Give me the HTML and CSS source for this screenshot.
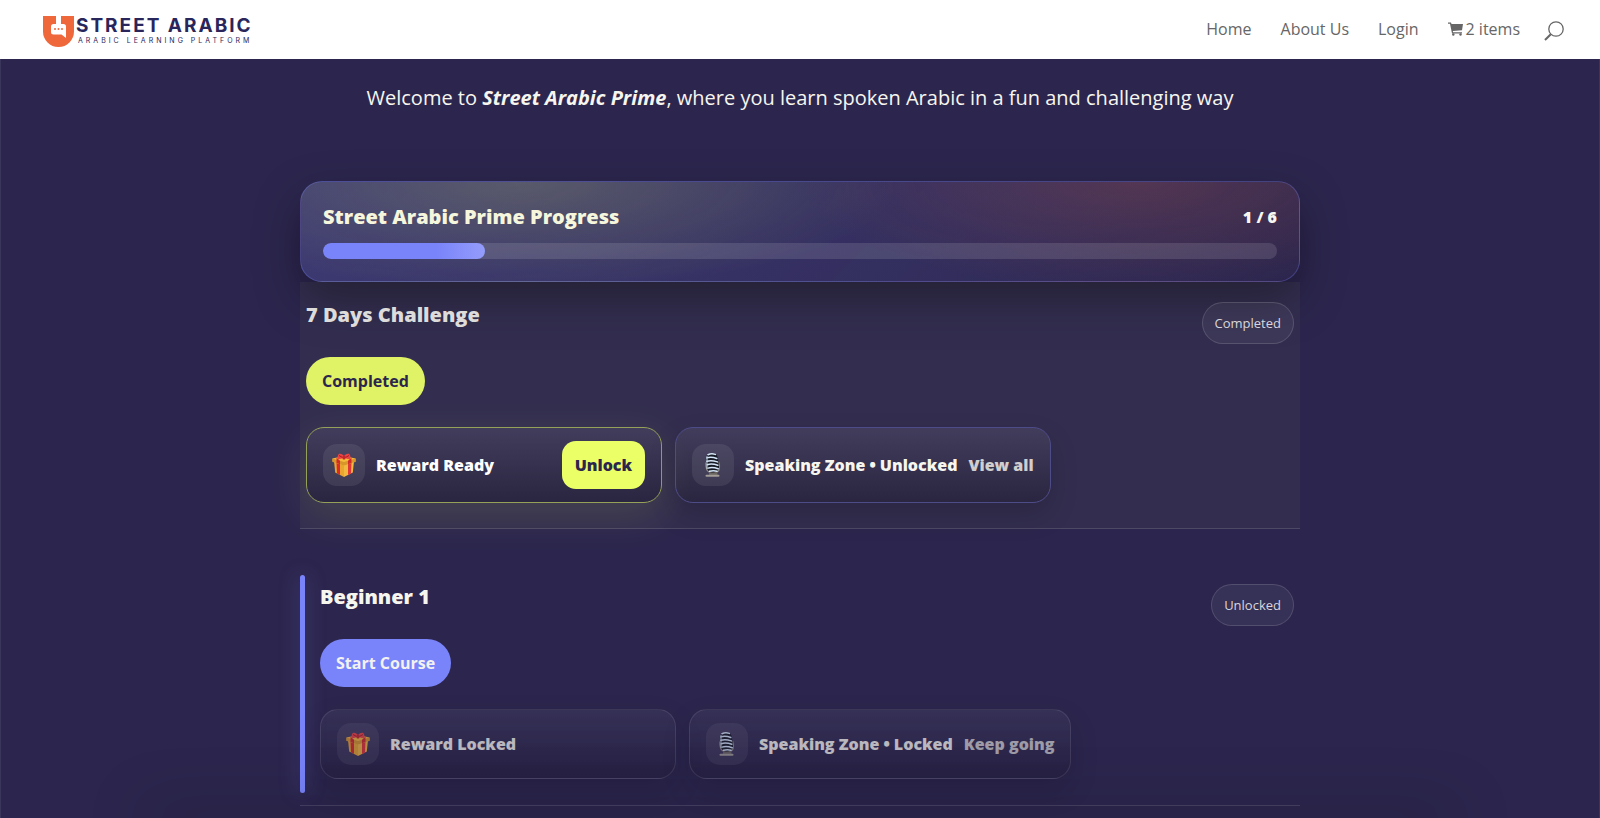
FILE: index.html
```html
<!DOCTYPE html>
<html lang="en">
<head>
    <meta charset="UTF-8">
    <meta name="viewport" content="width=device-width, initial-scale=1.0">
    <title>Street Arabic Prime</title>
    <link rel="stylesheet" href="styles.css">
</head>
<body>
    <!-- shared icons -->
    <svg class="sprite" aria-hidden="true">
        <symbol id="gift" viewBox="0 0 24 24">
            <path d="M2 8l10 4v12L3.200 19.500z" fill="#e9a52f"/>
            <path d="M22 8l-10 4v12l8.800-4.500z" fill="#f2b941"/>
            <path d="M4.500 9l3.500 1.400v11.500l-3-1.500z" fill="#d92b2b"/>
            <path d="M19.500 9L16 10.400v11.500l3-1.500z" fill="#e23535"/>
            <path d="M.5 5.500L12 3l11.500 2.500v3.200L12 12.500.5 8.700z" fill="#f5b93c"/>
            <path d="M.5 5.500L12 9l11.500-3.500v3.200L12 12.500.5 8.700z" fill="#d8952a"/>
            <path d="M4.500 4.700L8 7.800v3.400l-3.500-1.200zM19.500 4.700L16 7.800v3.400l3.500-1.200z" fill="#d22a2a"/>
            <path d="M12 4.800C9 5.800 6.500 6.800 5.300 5.800 5.500 4 5.700 2 7 .8 9 .2 11 1.500 12 3c1-1.500 3-2.800 5-2.200 1.300 1.200 1.500 3.200 1.700 5-1.200 1-3.700 0-6.700-1z" fill="#ee4343"/>
            <path d="M7 2.500l3.500 2M17 2.500l-3.500 2" stroke="#a71d24" stroke-width="1"/>
            <rect x="10.500" y="2.800" width="3" height="3.600" rx="1" fill="#c4262c"/>
        </symbol>
        <symbol id="mic" viewBox="0 0 24 24">
            <path d="M5 9.500c-.5 6 1.500 9 4.500 10M17.500 9c2 6 .5 10-3 10.500" fill="none" stroke="#8b8680" stroke-width="1.500"/>
            <path d="M8 17h8l.5 5H8z" fill="#6b6660"/>
            <rect x="4.500" y="21.800" width="14" height="2" rx="1" fill="#a39e98"/>
            <rect x="5.500" y=".3" width="12" height="19" rx="5" fill="#161a24" transform="rotate(-8 12 10)"/>
            <g fill="none" stroke="#d5e6f8" stroke-width="1.500" stroke-linecap="round">
                <path d="M7 1.700q3.500-1.500 7.300-.3"/>
                <path d="M5.800 4.900q4.500-1.400 10 .6"/>
                <path d="M5.900 8.300q4.500-1.400 10.500.6"/>
                <path d="M6.300 11.700q4.500-1.400 10.500.6"/>
                <path d="M7 15.100q4.500-1.400 10.200.6"/>
                <path d="M8.500 18.200q4-1 7.500 0"/>
            </g>
            <path d="M6 3v13" stroke="#c2d3e6" stroke-width="1"/>
        </symbol>
    </svg>

    <header class="site-header">
        <a class="logo" href="#">
            <svg class="logo-mark" viewBox="0 0 31 31" aria-hidden="true">
                <path d="M0 0h13v8h5V0h13v15.500a15.500 15.500 0 0 1-31 0z" fill="#ee683c"/>
                <path d="M10.500 8h10a2.500 2.500 0 0 1 2.500 2.500V22l-4.500-3.500h-8A2.500 2.500 0 0 1 8 16v-5.500A2.500 2.500 0 0 1 10.500 8z" fill="#fff"/>
                <g fill="#ee683c"><circle cx="12" cy="13" r="1"/><circle cx="15.500" cy="13" r="1"/><circle cx="19" cy="13" r="1"/></g>
            </svg>
            <span class="logo-text">
                <span class="logo-name">STREET ARABIC</span>
                <span class="logo-tagline">ARABIC LEARNING PLATFORM</span>
            </span>
        </a>
        <nav class="main-nav">
            <a href="#">Home</a>
            <a href="#">About Us</a>
            <a href="#">Login</a>
            <a class="cart" href="#">
                <svg viewBox="0 0 15 14" aria-hidden="true">
                    <path d="M0 .5h3l.5 1.500H15l-1 6.300-9.200.7.300 1.300H14v1.200H4L2 1.700H0z" fill="#666"/>
                    <circle cx="5.300" cy="12.500" r="1.200" fill="#666"/>
                    <circle cx="12.500" cy="12.500" r="1.200" fill="#666"/>
                </svg>2 items</a>
            <button class="search" type="button" aria-label="Search">
                <svg viewBox="0 0 20 20" aria-hidden="true">
                    <circle cx="12" cy="8" r="7.200" fill="none" stroke="#666" stroke-width="1.300"/>
                    <path d="M6.800 13.200L1 19" stroke="#666" stroke-width="2"/>
                </svg>
            </button>
        </nav>
    </header>

    <main>
        <p class="welcome">Welcome to <strong><em>Street Arabic Prime</em></strong>, where you learn spoken Arabic in a fun and challenging way</p>

        <div class="courses">
            <section class="progress-card">
                <div class="progress-head">
                    <h2>Street Arabic Prime Progress</h2>
                    <span class="progress-count">1 / 6</span>
                </div>
                <div class="progress-track">
                    <div class="progress-fill" style="width: 17%"></div>
                </div>
            </section>

            <section class="course completed">
                <div class="course-head">
                    <h2>7 Days Challenge</h2>
                    <span class="status">Completed</span>
                </div>
                <a class="course-btn" href="#">Completed</a>
                <div class="extras">
                    <div class="extra reward ready">
                        <span class="extra-icon"><svg><use href="#gift"/></svg></span>
                        <span class="extra-title">Reward Ready</span>
                        <button class="unlock" type="button">Unlock</button>
                    </div>
                    <div class="extra speaking">
                        <span class="extra-icon"><svg><use href="#mic"/></svg></span>
                        <span class="extra-title">Speaking Zone • Unlocked</span>
                        <a class="extra-note" href="#">View all</a>
                    </div>
                </div>
            </section>

            <section class="course current">
                <div class="marker"></div>
                <div class="course-body">
                    <div class="course-head">
                        <h2>Beginner 1</h2>
                        <span class="status">Unlocked</span>
                    </div>
                    <a class="course-btn start" href="#">Start Course</a>
                    <div class="extras">
                        <div class="extra reward locked">
                            <span class="extra-icon"><svg><use href="#gift"/></svg></span>
                            <span class="extra-title">Reward Locked</span>
                        </div>
                        <div class="extra locked">
                            <span class="extra-icon"><svg><use href="#mic"/></svg></span>
                            <span class="extra-title">Speaking Zone • Locked</span>
                            <span class="extra-note">Keep going</span>
                        </div>
                    </div>
                </div>
            </section>
        </div>
    </main>
</body>
</html>
```

FILE: styles.css
```css
* {
    box-sizing: border-box;
}

body {
    margin: 0;
    background: #2c264e;
    color: #f7f6ee;
    font-family: "Open Sans", Arial, sans-serif;
    font-size: 16px;
    line-height: 24px;
    overflow: hidden;
}

/* soft shade along the bottom edge */
body::after {
    content: "";
    position: fixed;
    right: 150px;
    bottom: -2px;
    left: 150px;
    height: 2px;
    box-shadow: 0 0 60px 8px rgba(0, 0, 0, 0.3);
}

h2, p {
    margin: 0;
}

a {
    color: inherit;
    text-decoration: none;
}

button {
    border: none;
    font-family: inherit;
    cursor: pointer;
}

.sprite {
    position: absolute;
    width: 0;
    height: 0;
}

/* header */
.site-header {
    display: flex;
    justify-content: space-between;
    align-items: center;
    height: 59px;
    padding: 0 36px 0 43px;
    background: #fff;
}

.logo {
    display: flex;
    gap: 2px;
    padding-top: 3px;
}

.logo-mark {
    width: 31px;
    height: 31px;
}

.logo-text {
    display: flex;
    flex-direction: column;
    color: #29265b;
    font-family: Inter, sans-serif;
    white-space: nowrap;
}

.logo-name {
    font-size: 19px;
    font-weight: 700;
    line-height: 20px;
    letter-spacing: 2px;
}

.logo-tagline {
    padding-left: 2px;
    font-size: 7px;
    line-height: 10px;
    letter-spacing: 3px;
}

.main-nav {
    display: flex;
    align-items: center;
    gap: 29px;
    padding-bottom: 1px;
    color: #666;
    font-weight: 500;
}

.cart {
    display: flex;
    align-items: center;
    gap: 3px;
}

.cart svg {
    width: 15px;
    height: 14px;
}

.search {
    display: flex;
    margin-left: -5px;
    padding: 3px 0 0;
    background: none;
}

.search svg {
    width: 20px;
    height: 20px;
}

main {
    min-height: calc(100vh - 59px);
    border: solid rgba(255, 255, 255, 0.07);
    border-width: 0 1px;
}

/* intro */
.welcome {
    padding: 20px 20px 64px;
    font-size: 20px;
    line-height: 38px;
    text-align: center;
}

.courses {
    max-width: 1000px;
    margin: 0 auto;
}

.courses h2 {
    font-size: 20px;
    font-weight: 800;
    line-height: 26px;
}

/* progress */
.progress-card {
    padding: 22px;
    border: 1px solid rgba(122, 132, 250, 0.3);
    border-radius: 22px;
    background:
        radial-gradient(ellipse 38% 110% at 22% 0%, rgba(235, 255, 100, 0.18), transparent),
        radial-gradient(ellipse 34% 110% at 84% 0%, rgba(238, 104, 60, 0.18), transparent),
        linear-gradient(135deg, rgba(122, 132, 250, 0.22), rgba(122, 132, 250, 0.08) 70%, transparent);
    box-shadow: 0 18px 45px rgba(0, 0, 0, 0.35);
}

.progress-head {
    display: flex;
    justify-content: space-between;
    align-items: center;
    margin-bottom: 13px;
}

.progress-head h2 {
    color: #f6f6dc;
}

.progress-count {
    font-weight: 800;
}

.progress-track {
    height: 16px;
    border-radius: 8px;
    background: rgba(255, 255, 255, 0.12);
    overflow: hidden;
}

.progress-fill {
    height: 100%;
    border-radius: 8px;
    background: linear-gradient(90deg, #7a84fa 70%, #949cfb);
}

/* courses */
.course {
    border-bottom: 1px solid rgba(255, 255, 255, 0.13);
}

.completed {
    padding: 20px 6px 25px;
    background: rgba(235, 255, 130, 0.04);
}

.completed h2 {
    color: #dddcda;
}

.current {
    display: flex;
    margin-top: 46px;
    padding-bottom: 12px;
}

.marker {
    width: 5px;
    border-radius: 3px;
    background: #7a84fa;
    box-shadow: 0 0 20px rgba(122, 132, 250, 0.35);
}

.course-body {
    flex: 1;
    padding: 9px 6px 14px 15px;
}

.course-head {
    display: flex;
    justify-content: space-between;
    align-items: flex-start;
    height: 55px;
}

.status {
    padding: 8px 12px;
    border: 1px solid rgba(255, 255, 255, 0.14);
    border-radius: 21px;
    background: rgba(255, 255, 255, 0.05);
    color: #d9d7dc;
    font-size: 13px;
}

.course-btn {
    display: inline-block;
    padding: 12px 16px;
    border-radius: 24px;
    background: #e0f265;
    color: #2c264e;
    font-weight: 700;
    vertical-align: top;
}

.start {
    background: #7a84fa;
    color: #f3f2f0;
}

.extras {
    display: flex;
    gap: 13px;
    margin-top: 22px;
}

.extra {
    display: flex;
    align-items: center;
    gap: 11px;
    padding: 13px 16px;
    border: 1px solid rgba(255, 255, 255, 0.14);
    border-radius: 18px;
    background: linear-gradient(rgba(255, 255, 255, 0.07), rgba(0, 0, 0, 0.18));
    box-shadow: 0 12px 28px rgba(0, 0, 0, 0.16);
    font-weight: 800;
    white-space: nowrap;
}

.reward {
    width: 356px;
}

.ready {
    border-color: #96a058;
    box-shadow: 0 12px 40px rgba(235, 255, 100, 0.1);
}

.ready .extra-title {
    color: #fff;
}

.speaking {
    border-color: #4d4c88;
}

.locked {
    opacity: 0.7;
}

.extra-icon {
    display: flex;
    justify-content: center;
    align-items: center;
    width: 42px;
    height: 42px;
    border-radius: 14px;
    background: rgba(255, 255, 255, 0.08);
}

.extra-icon svg {
    width: 24px;
    height: 24px;
}

.extra-note {
    opacity: 0.8;
}

.unlock {
    margin-left: auto;
    padding: 12px 13px;
    border-radius: 14px;
    background: #ebff66;
    color: #2c264e;
    font-size: 16px;
    font-weight: 800;
    line-height: 24px;
}
```
